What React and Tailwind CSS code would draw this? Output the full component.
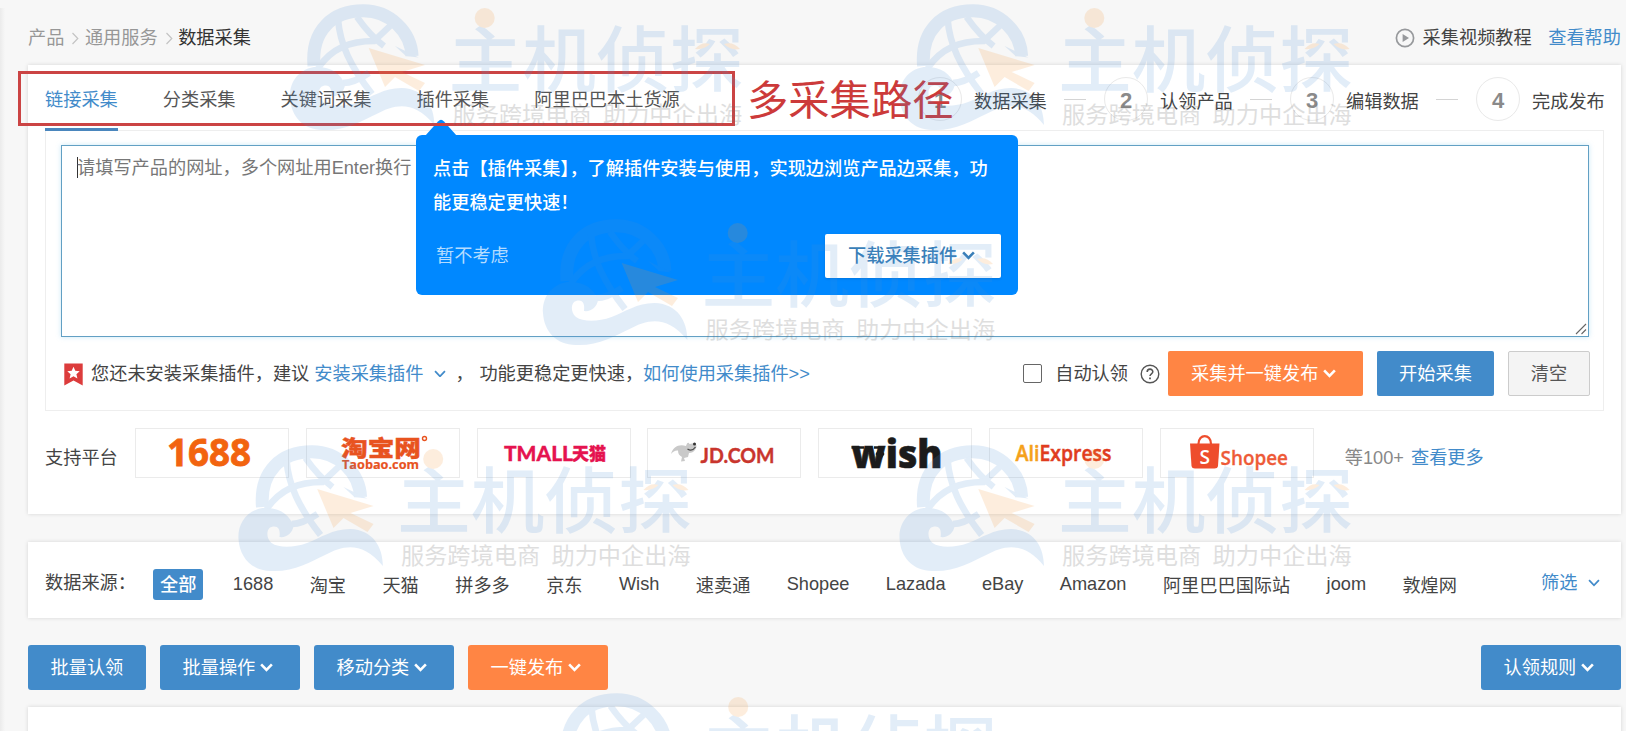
import React from "react";

function Chevron({ className = "", w = 12, sw = 2.2 }) {
  return (
    <svg width={w} height={w * 0.66} viewBox="0 0 12 8" className={className} fill="none" stroke="currentColor" strokeWidth={sw}>
      <path d="M1 1.2 L6 6.4 L11 1.2" />
    </svg>
  );
}

function CrumbArrow() {
  return (
    <svg width="8" height="13" viewBox="0 0 8 13" fill="none" stroke="#c4c4c4" strokeWidth="1.2">
      <path d="M1.5 1 L6.8 6.5 L1.5 12" />
    </svg>
  );
}

function Header() {
  return (
    <header className="flex h-[65px] items-center pt-[11px] pl-7 pr-[5px]">
      <nav className="flex items-center text-[#979797]">
        <span>产品</span>
        <span className="ml-[7px] mr-[5.5px]"><CrumbArrow /></span>
        <span>通用服务</span>
        <span className="ml-[7px] mr-[5.5px]"><CrumbArrow /></span>
        <span className="text-[#333]">数据采集</span>
      </nav>
      <div className="ml-auto flex items-center">
        <svg width="20" height="20" viewBox="0 0 20 20" className="mr-[8px]">
          <circle cx="10" cy="10" r="8.6" fill="none" stroke="#97999c" strokeWidth="1.7" />
          <path d="M7.6 6 L14 10 L7.6 14 Z" fill="#97999c" />
        </svg>
        <span className="text-[#444]">采集视频教程</span>
        <a className="ml-[16.5px] text-[#428bca]">查看帮助</a>
      </div>
    </header>
  );
}

function Steps() {
  const steps = ["数据采集", "认领产品", "编辑数据", "完成发布"];
  return (
    <ol className="ml-auto flex items-center">
      {steps.map((s, i) => (
        <li key={s} className="flex items-center">
          {i > 0 && <span className="ml-[17px] mr-[18px] h-px w-[22px] bg-[#d4d4d4]" />}
          <span className="flex size-11 items-center justify-center rounded-full border border-[#e9e9e9] pt-[3px] text-[22px] font-bold text-[#8a8a8a]">{i + 1}</span>
          <span className="ml-[12px] w-[73px] pt-[5px] text-[#444]">{s}</span>
        </li>
      ))}
    </ol>
  );
}

function TabBar() {
  const tabs = ["链接采集", "分类采集", "关键词采集", "插件采集", "阿里巴巴本土货源"];
  return (
    <div className="flex h-[65px] items-center">
      <div className="flex h-full gap-[45px]">
        {tabs.map((t, i) => (
          <div
            key={t}
            className={
              i === 0
                ? "z-10 flex h-[66px] items-center border-b-[3px] border-[#4a86bd] pt-[7px] text-[#428bca]"
                : "flex h-[66px] items-center border-b-[3px] border-transparent pt-[7px] text-[#555]"
            }
          >
            {t}
          </div>
        ))}
      </div>
      <div className="ml-auto -mr-px pt-[3px]"><Steps /></div>
    </div>
  );
}

function Tooltip() {
  return (
    <div className="absolute left-[416px] top-[135px] h-[160px] w-[602px] rounded-[6px] bg-[#0088ff] pl-[17px] pr-[17px] pt-[18px] text-white">
      <svg width="32" height="17" viewBox="0 0 32 17" className="absolute -top-4 left-[9px]">
        <path d="M0 17 L13 2.5 Q16 -0.8 19 2.5 L32 17 Z" fill="#0088ff" />
      </svg>
      <p className="font-medium leading-[33.5px]">
        <span className="block whitespace-nowrap">点击【插件采集】，了解插件安装与使用，实现边浏览产品边采集，功</span>
        <span className="block whitespace-nowrap">能更稳定更快速！</span>
      </p>
      <div className="mt-[13.5px] flex items-center justify-between">
        <span className="ml-[3px] text-[#b5dcff]">暂不考虑</span>
        <button className="flex h-11 w-[176px] items-center rounded-[2px] bg-white pl-[23px] font-medium text-[#3a7fb8] shadow">
          下载采集插件
          <Chevron className="ml-[5px]" w={13} sw={2.4} />
        </button>
      </div>
    </div>
  );
}

function HintRow() {
  return (
    <div className="mt-[14px] flex h-[45px] items-center">
      <svg width="19" height="23" viewBox="0 0 19 23" className="ml-[3px] mr-[8px] mt-[2px]">
        <path d="M0.3 0.5 H18.7 V22.6 L9.5 17.4 L0.3 22.6 Z" fill="#dc3c3c" />
        <path d="M9.5 3.8 L11.3 7.8 L15.7 8.3 L12.4 11.2 L13.4 15.5 L9.5 13.3 L5.6 15.5 L6.6 11.2 L3.3 8.3 L7.7 7.8 Z" fill="#fff" />
      </svg>
      <span className="text-[#444]">您还未安装采集插件，建议</span>
      <a className="ml-[5px] text-[#428bca]">安装采集插件</a>
      <Chevron className="ml-[11px] text-[#428bca]" sw={1.8} />
      <span className="ml-[9px] w-[24px] text-[#444]">，</span>
      <span className="text-[#444]">功能更稳定更快速，</span>
      <a className="text-[#428bca]">如何使用采集插件&gt;&gt;</a>
      <div className="-mr-px ml-auto flex items-center">
        <span className="size-[19px] rounded-[2px] border-[1.5px] border-[#666] bg-white" />
        <span className="ml-[13px] text-[#444]">自动认领</span>
        <svg width="20" height="20" viewBox="0 0 20 20" className="ml-[12px] mr-[8px]" fill="none" stroke="#555" strokeWidth="1.4">
          <circle cx="10" cy="10" r="8.8" />
          <path d="M7.2 8 C7.2 4.2 12.8 4.2 12.8 7.8 C12.8 9.8 10 9.8 10 12" strokeWidth="1.6" />
          <path d="M10 13.5 V15.3" strokeWidth="1.8" />
        </svg>
        <button className="flex h-[45px] w-[195px] items-center rounded-[2px] bg-[#ff8544] pl-[23px] text-white">
          采集并一键发布
          <Chevron className="ml-[5px]" w={13} sw={2.4} />
        </button>
        <button className="ml-[14px] h-[45px] w-[117px] rounded-[2px] bg-[#428bca] text-white">开始采集</button>
        <button className="ml-[14px] h-[45px] w-[82px] rounded-[2px] border border-[#ccc] bg-[#f4f4f4] text-[#555]">清空</button>
      </div>
    </div>
  );
}

function LogoText({ x, y, w, size, fill, family, weight = 700, stroke = 0, children }) {
  return (
    <text x={x} y={y} textLength={w} lengthAdjust="spacingAndGlyphs" fontSize={size} fill={fill} fontFamily={family} fontWeight={weight} stroke={fill} strokeWidth={stroke}>
      {children}
    </text>
  );
}

const CJK = "'Noto Sans CJK SC', sans-serif";

const LOGOS = [
  <LogoText key="t" x={32} y={38} w={84} size={38} fill="#f2640f" family="'Open Sans', sans-serif" stroke={0.8}>1688</LogoText>,
  <g key="g">
    <LogoText x={35} y={28} w={80} size={22} fill="#e8531f" family={CJK} weight={900} stroke={0.4}>淘宝网</LogoText>
    <circle cx="118.5" cy="10.5" r="2" fill="none" stroke="#e8531f" strokeWidth="1.4" />
    <LogoText x={36} y={40.5} w={77} size={13} fill="#e8531f" family="'Open Sans', sans-serif" stroke={0.2}>Taobao.com</LogoText>
  </g>,
  <g key="g">
    <LogoText x={27} y={32.5} w={69} size={20.5} fill="#e5134f" family="Lato, sans-serif" weight={900} stroke={0.3}>TMALL</LogoText>
    <LogoText x={95} y={32} w={34} size={17} fill="#e5134f" family={CJK} weight={900} stroke={0.4}>天猫</LogoText>
  </g>,
  <g key="g">
    <path d="M24 26 C26 19 32 15.5 39 18 L40 15.5 Q41.5 14 42.5 16 L48 15 Q51 18 48 22 Q46 25 42 25 L41 29 L37 30 L38 33 L34 33.5 L35 29 Q31 27 31 22.5 Q27 22 24 26 Z" fill="#c9c9c9" />
    <path d="M40.5 21 Q45 24 48.5 19" fill="none" stroke="#4d4d4d" strokeWidth="1.3" />
    <circle cx="47.5" cy="16" r="1.5" fill="#333" />
    <LogoText x={53.5} y={34.5} w={74} size={20.5} fill="#c9352d" family="Lato, sans-serif" weight={700} stroke={0.4}>JD.COM</LogoText>
  </g>,
  <g key="g">
    <LogoText x={33.5} y={39.5} w={91} size={38.5} fill="#1b1b1b" family="'Open Sans', sans-serif" weight={800} stroke={0.6}>wish</LogoText>
    <path d="M33.5 19.5 H46 M56 19.5 H61" stroke="#1b1b1b" strokeWidth="2.4" />
    <path d="M62 19 L66.5 26 L62 33 L57.5 26 Z" fill="#1b1b1b" />
  </g>,
  <g key="g">
    <LogoText x={26.5} y={33} w={24} size={22} fill="#f5a11b" family="'Open Sans', sans-serif" weight={600} stroke={0.5}>Ali</LogoText>
    <LogoText x={50.5} y={33} w={72} size={22} fill="#e03c1e" family="'Open Sans', sans-serif" weight={600} stroke={0.5}>Express</LogoText>
  </g>,
  <g key="g">
    <path d="M30 15.5 H59.5 L58 38 Q57.5 40.5 54.5 40.5 H35 Q32 40.5 31.5 38 Z" fill="#ee4d2d" />
    <path d="M38.5 16 C38.5 5.5 51 5.5 51 16" fill="none" stroke="#ee4d2d" strokeWidth="2.2" />
    <LogoText x={39.5} y={35.5} w={10.5} size={20} fill="#ffffff" family="'Open Sans', sans-serif" weight={600}>S</LogoText>
    <LogoText x={60.5} y={37} w={67.5} size={20.5} fill="#ee5a37" family="'Open Sans', sans-serif" weight={600} stroke={0.3}>Shopee</LogoText>
  </g>,
];

function Platforms() {
  return (
    <div className="mt-[17px] flex h-[50px] items-center">
      <span className="w-[90px] pt-[9px] text-[#444]">支持平台</span>
      <div className="flex gap-[16.8px]">
        {LOGOS.map((logo, i) => (
          <div key={i} className="h-[50px] w-[154px] border border-[#ebebeb] bg-white">
            <svg width="152" height="48" viewBox="1 1 152 48">{logo}</svg>
          </div>
        ))}
      </div>
      <span className="ml-[31px] pt-[9px] text-[#888]">等100+</span>
      <a className="ml-[7px] pt-[9px] text-[#428bca]">查看更多</a>
    </div>
  );
}

function CollectCard() {
  return (
    <section className="h-[449px] bg-white px-[17px] shadow-[0_0_4px_rgba(0,0,0,0.14)]">
      <TabBar />
      <div className="h-[281px] border border-[#eeeeee] pl-[15px] pr-[14px] pt-[14px]">
        <div className="relative h-[192px] border border-[#62a0c4] bg-white shadow-[0_0_5px_rgba(102,190,233,0.35)]">
          <div className="flex pl-[15px] pt-[9px] text-[#777]">
            <span className="mt-[2px] h-[21px] w-px bg-[#333]" />
            <span className="-ml-px">请填写产品的网址，多个网址用Enter换行</span>
          </div>
          <svg width="12" height="12" viewBox="0 0 12 12" className="absolute bottom-px right-px" stroke="#666" strokeWidth="1.1">
            <path d="M1 11 L11 1 M6.5 11 L11 6.5" />
          </svg>
        </div>
        <HintRow />
      </div>
      <Platforms />
    </section>
  );
}

function SourceCard() {
  const items = ["1688", "淘宝", "天猫", "拼多多", "京东", "Wish", "速卖通", "Shopee", "Lazada", "eBay", "Amazon", "阿里巴巴国际站", "joom", "敦煌网"];
  return (
    <section className="mt-7 flex h-[76px] items-center bg-white pl-[17px] pr-[21.5px] pt-[6px] shadow-[0_0_4px_rgba(0,0,0,0.14)]">
      <span className="w-[108px] text-[#444]">数据来源：</span>
      <div className="flex items-center gap-[22.4px] pt-[3px] text-[#444]">
        <span className="h-[31px] rounded-[3px] bg-[#428bca] px-[7px] pt-px font-medium leading-[31px] text-white">全部</span>
        {items.map((t) => (
          <span key={t} className={/^[\x00-\x7f]+$/.test(t) ? "px-[7px] pb-[1px]" : "px-[7px] pt-[2px]"}>{t}</span>
        ))}
      </div>
      <a className="ml-auto text-[#428bca]">筛选</a>
      <Chevron className="ml-[10px] text-[#428bca]" sw={1.8} />
    </section>
  );
}

function ActionButton({ label, arrow, orange }) {
  return (
    <button
      className={
        (orange ? "bg-[#ff8544]" : "bg-[#428bca]") +
        (arrow ? " w-[140px]" : " w-[118px]") +
        " flex h-[45px] items-center rounded-[3px] pl-[22.5px] text-white"
      }
    >
      {label}
      {arrow && <Chevron className="ml-[5px]" w={13} sw={2.4} />}
    </button>
  );
}

function Actions() {
  return (
    <div className="mt-[27px] flex gap-[14px]">
      <ActionButton label="批量认领" />
      <ActionButton label="批量操作" arrow />
      <ActionButton label="移动分类" arrow />
      <ActionButton label="一键发布" arrow orange />
      <div className="ml-auto"><ActionButton label="认领规则" arrow /></div>
    </div>
  );
}

function Watermark({ x, y }) {
  const blue = "#4a8fd8";
  const orange = "#f5932f";
  return (
    <g transform={`translate(${x} ${y})`}>
      <g opacity="0.155">
        <path d="M314 66 C311 30 333 10.8 363.4 10.8 C390 10.8 411 32 412 56" fill="none" stroke={blue} strokeWidth="13" />
        <path d="M406 56 L395 46 L418.7 57.5 Z" fill={blue} />
        <path d="M338 19 C340 44 350 66 372 94" fill="none" stroke={blue} strokeWidth="6.5" />
        <path d="M357 17 C364 27 372 37 384 46" fill="none" stroke={blue} strokeWidth="6.5" />
        <path d="M318 68 C332 48 350 41 374 41 L390 26" fill="none" stroke={blue} strokeWidth="6.5" />
        <path d="M343 83 C352 83 360 79 369 73" fill="none" stroke={blue} strokeWidth="6.5" />
        <path d="M314 67 C297 70 289 84 290 98 C291 116 303 130 323 130 C345 131 362 121 376.5 114 C395 104 414 100 434.4 125 C434 106 425 89 401.5 88 C384 88 372 97 358.6 102 C345 107 330 107 323 102 C317 97 318 87 323 86 C330 84 332 89 331 96 C338 97 344 92 345 85 C341 73 330 66 314 67 Z" fill={blue} />
        <path d="M368.7 48 L425 65 L402 72 L425 83 L419 91 L395 77 L385 87 Z" fill={orange} />
        <g fill={blue} fontFamily={CJK} fontWeight="500" fontSize="72">
          <text x="448.5" y="86" textLength="295" lengthAdjust="spacingAndGlyphs">主机侦探</text>
        </g>
        <circle cx="484.7" cy="18" r="10" fill={orange} />
        <path d="M695 49 Q702 41 710 44 Q704 50 695 49 Z M724 44 Q733 41 740 49 Q731 51 724 44 Z" fill={orange} />
      </g>
      <g opacity="0.22" fill="#6f6f6f" fontFamily={CJK} fontSize="23.2">
        <text x="452.5" y="123.3">服务跨境电商</text>
        <text x="603" y="123.3">助力中企出海</text>
      </g>
    </g>
  );
}

export default function App() {
  return (
    <div className="relative h-[731px] w-[1626px] overflow-hidden bg-[#f7f7f7] font-['Liberation_Sans','Noto_Sans_CJK_SC',sans-serif] text-[18.2px] leading-[26px] whitespace-nowrap">
      <div className="absolute left-0 top-[8px] h-full w-[5px] bg-linear-to-r from-[#ebebeb] to-[#f7f7f7]" />
      <Header />
      <main className="pl-7 pr-[5px]">
        <CollectCard />
        <SourceCard />
        <Actions />
        <section className="mt-[17px] h-[40px] bg-white shadow-[0_0_4px_rgba(0,0,0,0.14)]" />
      </main>
      <Tooltip />
      <div className="absolute left-[18px] top-[71px] h-[55px] w-[717px] border-[3px] border-[#cb4444]" />
      <div className="absolute left-[747px] top-[71px] text-[41.3px] leading-[60px] text-[#cc3a3a]">多采集路径</div>
      <svg width="1626" height="731" viewBox="0 0 1626 731" className="pointer-events-none absolute left-0 top-0">
        <Watermark x={0} y={0} />
        <Watermark x={609.6} y={0} />
        <Watermark x={253} y={215} />
        <Watermark x={-51.5} y={441} />
        <Watermark x={609.6} y={441} />
        <Watermark x={253.5} y={689} />
      </svg>
    </div>
  );
}
